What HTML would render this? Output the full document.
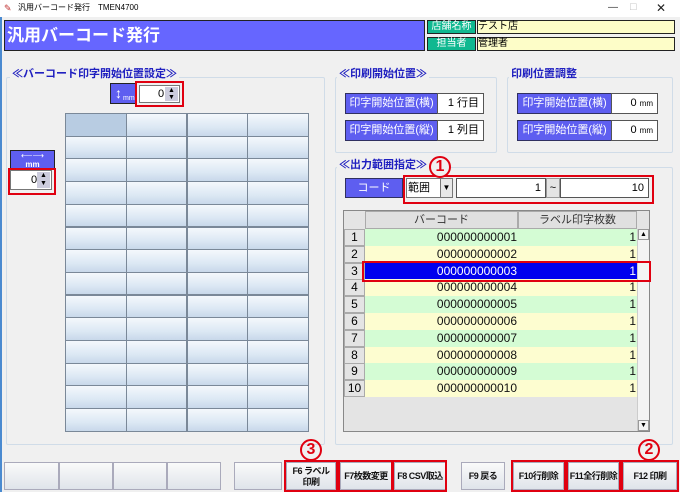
<!DOCTYPE html><html><head><meta charset="utf-8"><style>
*{box-sizing:border-box;margin:0;padding:0}
body{width:680px;height:492px;background:#f0f0f0;position:relative;overflow:hidden;font-family:"Liberation Sans","Noto Sans CJK JP",sans-serif;font-size:11px}
.a{position:absolute}
.grp{position:absolute;border:1px solid #d0dce8;border-radius:2px}
.gt{position:absolute;background:#f0f0f0;color:#2020c0;font-weight:bold;font-size:11px;padding:0 2px;line-height:12px}
.lb{position:absolute;background:#5e5ef0;color:#fff;font-size:11px;text-align:center;border:1px solid #303060;line-height:18px}
.vl{position:absolute;background:#fff;border:1px solid #555;text-align:right;padding-right:4px;font-size:11px;line-height:18px}
.red{position:absolute;border:2px solid #e00010}
.cell{position:absolute;background:linear-gradient(#f4f8fc,#dce8f4 60%,#c8d8ea);border:1px solid #7a8898}
.btn{position:absolute;top:462px;height:28px;background:linear-gradient(#fafafa,#dfe4ea);border:1px solid #aab;font-size:9px;font-weight:bold;text-align:center;line-height:26px;color:#111;white-space:nowrap;overflow:hidden;letter-spacing:-0.5px}
.num{position:absolute;color:#e00010;font-weight:bold;width:22px;height:22px;border:2px solid #e00010;border-radius:50%;text-align:center;font-size:16px;line-height:18px}
.row{position:absolute;left:365px;width:272px;height:17px;font-size:12px;line-height:17px}
.rh{position:absolute;left:344px;width:21px;height:17px;background:#e4e4e4;border:1px solid #aaa;text-align:center;line-height:15px;font-size:12px}
</style></head><body>
<div class="a" style="left:0;top:0;width:680px;height:17px;background:#fff;font-size:8px;line-height:16px;padding-left:18px">汎用バーコード発行　TMEN4700</div>
<div class="a" style="left:4px;top:3px;color:#c03030;font-size:9px">✎</div>
<div class="a" style="left:608px;top:2px;font-size:10px;color:#333">—</div>
<div class="a" style="left:630px;top:1px;font-size:11px;color:#bbb">□</div>
<div class="a" style="left:656px;top:1px;font-size:12px;color:#222">✕</div>
<div class="a" style="left:0;top:17px;width:2px;height:475px;background:#4a8ad0"></div>
<div class="a" style="left:4px;top:20px;width:421px;height:31px;background:#6666ff;border:1px solid #222;color:#fff;font-size:17px;font-weight:bold;line-height:29px;padding-left:2px">汎用バーコード発行</div>
<div class="a" style="left:427px;top:20px;width:49px;height:14px;background:#10b890;border:1px solid #222;color:#fff;font-size:10px;text-align:center;line-height:12px">店舗名称</div>
<div class="a" style="left:477px;top:20px;width:198px;height:14px;background:#fdfdc8;border:1px solid #222;font-size:10px;line-height:12px">テスト店</div>
<div class="a" style="left:427px;top:37px;width:49px;height:14px;background:#10b890;border:1px solid #222;color:#fff;font-size:10px;text-align:center;line-height:12px">担当者</div>
<div class="a" style="left:477px;top:37px;width:198px;height:14px;background:#fdfdc8;border:1px solid #222;font-size:10px;line-height:12px">管理者</div>

<div class="grp" style="left:6px;top:77px;width:319px;height:368px"></div>
<div class="gt" style="left:10px;top:68px">≪バーコード印字開始位置設定≫</div>
<div class="a" style="left:110px;top:83px;width:26px;height:21px;background:#5e5ef0;border:1px solid #222;color:#fff;font-size:7px;line-height:8px"><span style="position:absolute;left:4px;top:1px;font-size:14px;line-height:16px">↕</span><span style="position:absolute;left:12px;top:11px">mm</span></div>
<div class="a" style="left:139px;top:85px;width:41px;height:18px;background:#fff;border:1px solid #777"><span style="position:absolute;left:18px;top:2px">0</span><span style="position:absolute;right:1px;top:1px;width:13px;height:14px;background:#ccd;font-size:7px;line-height:7px;text-align:center">▲<br>▼</span></div>
<div class="red" style="left:135px;top:81px;width:49px;height:26px"></div>
<div class="a" style="left:10px;top:150px;width:45px;height:19px;background:#5e5ef0;border:1px solid #222;color:#fff;font-size:8px;text-align:center;line-height:9px">⟵⟶<br><b>mm</b></div>
<div class="a" style="left:10px;top:170px;width:42px;height:20px;background:#fff;border:1px solid #777"><span style="position:absolute;left:20px;top:3px">0</span><span style="position:absolute;right:1px;top:1px;width:13px;height:16px;background:#ccd;font-size:7px;line-height:8px;text-align:center">▲<br>▼</span></div>
<div class="red" style="left:8px;top:168px;width:48px;height:27px"></div>
<div id="grid"></div>

<div class="grp" style="left:335px;top:77px;width:162px;height:76px"></div>
<div class="gt" style="left:337px;top:68px">≪印刷開始位置≫</div>
<div class="lb" style="left:345px;top:93px;width:93px;height:21px">印字開始位置(横)</div>
<div class="vl" style="left:437px;top:93px;width:47px;height:21px">1 行目</div>
<div class="lb" style="left:345px;top:120px;width:93px;height:21px">印字開始位置(縦)</div>
<div class="vl" style="left:437px;top:120px;width:47px;height:21px">1 列目</div>
<div class="grp" style="left:507px;top:77px;width:166px;height:76px"></div>
<div class="gt" style="left:509px;top:68px">印刷位置調整</div>
<div class="lb" style="left:517px;top:93px;width:95px;height:21px">印字開始位置(横)</div>
<div class="vl" style="left:611px;top:93px;width:47px;height:21px">0 <small style="font-size:8px">mm</small></div>
<div class="lb" style="left:517px;top:120px;width:95px;height:21px">印字開始位置(縦)</div>
<div class="vl" style="left:611px;top:120px;width:47px;height:21px">0 <small style="font-size:8px">mm</small></div>

<div class="grp" style="left:335px;top:167px;width:338px;height:278px"></div>
<div class="gt" style="left:337px;top:159px">≪出力範囲指定≫</div>
<div class="lb" style="left:345px;top:178px;width:58px;height:20px;line-height:18px">コード</div>
<div class="a" style="left:406px;top:178px;width:35px;height:20px;background:#fff;border:1px solid #777;line-height:18px;font-size:11px;padding-left:1px">範囲</div>
<div class="a" style="left:440px;top:178px;width:13px;height:20px;background:#e8e8e8;border:1px solid #777;font-size:8px;text-align:center;line-height:18px">▼</div>
<div class="vl" style="left:456px;top:178px;width:90px;height:20px">1</div>
<div class="a" style="left:546px;top:178px;width:14px;height:20px;background:#e4e4e4;border:1px solid #999;text-align:center;line-height:18px">~</div>
<div class="vl" style="left:560px;top:178px;width:89px;height:20px">10</div>
<div class="red" style="left:403px;top:175px;width:251px;height:29px"></div>
<div class="num" style="left:429px;top:156px;background:#f0f0f0">1</div>

<div class="a" style="left:343px;top:210px;width:307px;height:222px;background:#e4e4e4;border:1px solid #888"></div>
<div class="a" style="left:365px;top:211px;width:153px;height:18px;background:#e0e0e0;border:1px solid #aaa;text-align:center;line-height:16px;color:#333">バーコード</div>
<div class="a" style="left:518px;top:211px;width:119px;height:18px;background:#e0e0e0;border:1px solid #aaa;text-align:center;line-height:16px;color:#333">ラベル印字枚数</div>
<div class="a" style="left:637px;top:229px;width:12px;height:202px;background:#f4f4f4;border-left:1px solid #ccc;font-size:7px;text-align:center"><div style="border:1px solid #999;height:11px;line-height:9px">▲</div><div style="position:absolute;bottom:0;width:11px;border:1px solid #999;height:11px;line-height:9px">▼</div></div>
<div id="rows"></div>
<div class="red" style="left:362px;top:261px;width:289px;height:21px"></div>

<div class="btn" style="left:4px;width:55px"></div>
<div class="btn" style="left:59px;width:54px"></div>
<div class="btn" style="left:113px;width:54px"></div>
<div class="btn" style="left:167px;width:54px"></div>
<div class="btn" style="left:234px;width:48px"></div>
<div class="btn" style="left:286px;width:50px;line-height:11px;padding-top:3px">F6 ラベル<br>印刷</div>
<div class="btn" style="left:340px;width:52px">F7枚数変更</div>
<div class="btn" style="left:394px;width:52px">F8 CSV取込</div>
<div class="btn" style="left:461px;width:44px">F9 戻る</div>
<div class="btn" style="left:513px;width:51px">F10行削除</div>
<div class="btn" style="left:568px;width:51px">F11全行削除</div>
<div class="btn" style="left:623px;width:54px">F12 印刷</div>
<div class="red" style="left:284px;top:460px;width:54px;height:32px"></div>
<div class="red" style="left:338px;top:460px;width:55px;height:32px"></div>
<div class="red" style="left:392px;top:460px;width:55px;height:32px"></div>
<div class="red" style="left:511px;top:460px;width:55px;height:32px"></div>
<div class="red" style="left:566px;top:460px;width:55px;height:32px"></div>
<div class="red" style="left:621px;top:460px;width:58px;height:32px"></div>
<div class="num" style="left:300px;top:439px">3</div>
<div class="num" style="left:638px;top:439px">2</div>
<script>
var g='';for(var r=0;r<14;r++)for(var c=0;c<4;c++){var x=65+c*60.75,y=113+r*22.7;g+='<div class="cell" style="left:'+x+'px;top:'+y+'px;width:61.5px;height:23.5px;'+(r==0&&c==0?'background:#b8cce2':'')+'"></div>';}
document.getElementById('grid').innerHTML=g;
var h='';for(var i=1;i<=10;i++){var y=229+(i-1)*16.8;var bg=i==3?'#0000ee':(i%2?'#d4fcd4':'#fdfdd0');var col=i==3?'#fff':'#111';
h+='<div class="rh" style="top:'+y+'px">'+i+'</div><div class="row" style="top:'+y+'px;background:'+bg+';color:'+col+'"><span style="position:absolute;right:120px">'+('00000000000'+(i<10?'0'+i:i)).slice(-12)+'</span><span style="position:absolute;right:1px">1</span></div>';}
document.getElementById('rows').innerHTML=h;
</script>
</body></html>
